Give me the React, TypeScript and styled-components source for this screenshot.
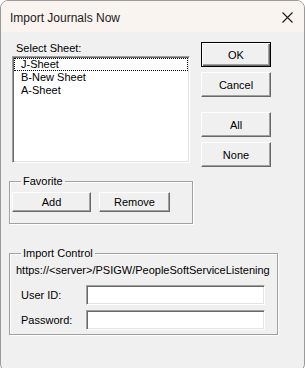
import {FC} from "react"
import styled, {createGlobalStyle} from "styled-components"

const GlobalStyle = createGlobalStyle`
    html, body {
        margin: 0;
        padding: 0;
        background: #ffffff;
        overflow: hidden;
    }
    body {
        font-family: "Liberation Sans", Arial, sans-serif;
        font-size: 11px;
        color: #000;
    }
`

const sheets = ["J-Sheet", "B-New Sheet", "A-Sheet"]

const App: FC = () => {
    return <>
        <GlobalStyle/>
        <Window>
            <TitleBar>
                <Title>Import Journals Now</Title>
                <CloseIcon width="11" height="11" viewBox="0 0 11 11">
                    <path d="M0.5 0.5 L10.5 10.5 M10.5 0.5 L0.5 10.5" stroke="#1a1a1a" strokeWidth="1.1" fill="none"/>
                </CloseIcon>
            </TitleBar>

            <Body>
                <TopRow>
                    <SheetColumn>
                        <Label>Select Sheet:</Label>
                        <ListBox>
                            {sheets.map((s, i) =>
                                <ListItem key={s} focused={i === 0}>{s}</ListItem>
                            )}
                        </ListBox>
                    </SheetColumn>

                    <ButtonColumn>
                        <Button isDefault={true}>OK</Button>
                        <Button>Cancel</Button>
                        <Spacer/>
                        <Button>All</Button>
                        <Button>None</Button>
                    </ButtonColumn>
                </TopRow>

                <Group width={184} top={8}>
                    <Legend>Favorite</Legend>
                    <FavoriteRow>
                        <Button width={79} height={20}>Add</Button>
                        <Button width={71} height={20}>Remove</Button>
                    </FavoriteRow>
                </Group>

                <Group width={269} top={23}>
                    <Legend>Import Control</Legend>
                    <ImportContent>
                        <Url>https://&lt;server&gt;/PSIGW/PeopleSoftServiceListening</Url>
                        <FieldRow>
                            <FieldLabel>User ID:</FieldLabel>
                            <TextInput type="text"/>
                        </FieldRow>
                        <FieldRow>
                            <FieldLabel>Password:</FieldLabel>
                            <TextInput type="password"/>
                        </FieldRow>
                    </ImportContent>
                </Group>
            </Body>
        </Window>
    </>
}

const Window = styled.div`
    box-sizing: border-box;
    width: 305px;
    height: 372px;
    border: 1px solid #9a9a9a;
    border-radius: 8px;
    overflow: hidden;
    background: #f0f0f0;
    display: flex;
    flex-direction: column;
`

const TitleBar = styled.div`
    height: 31px;
    flex-shrink: 0;
    display: flex;
    align-items: center;
    justify-content: space-between;
    padding: 0 11px 0 9px;
    background: #faf4f0;
`

const Title = styled.span`
    font-size: 12px;
    color: #1a1a1a;
    margin-top: 2px;
`

const CloseIcon = styled.svg`
    display: block;
    margin-top: 1px;
`

const Body = styled.div`
    padding: 10px 8px 0 8px;
`

const TopRow = styled.div`
    display: flex;
    margin-left: 3px;
    gap: 11px;
`

const SheetColumn = styled.div`
    width: 178px;
    display: flex;
    flex-direction: column;
`

const Label = styled.div`
    height: 14px;
    line-height: 12px;
    padding-left: 4px;
`

const ListBox = styled.div`
    box-sizing: border-box;
    height: 107px;
    background: #fff;
    border: 1px solid;
    border-color: #a0a0a0 #ffffff #ffffff #a0a0a0;
    box-shadow: inset 1px 1px 0 #696969, inset -1px -1px 0 #e3e3e3;
    padding: 1px 1px;
`

const ListItem = styled.div<{focused?: boolean}>`
    box-sizing: border-box;
    height: 13px;
    line-height: 13px;
    padding-left: 7px;
    outline: ${p => p.focused ? "1px dotted #000" : "none"};
    outline-offset: -1px;
`

const ButtonColumn = styled.div`
    display: flex;
    flex-direction: column;
    gap: 5px;
`

const Spacer = styled.div`
    height: 5px;
`

const Button = styled.button<{isDefault?: boolean, width?: number, height?: number}>`
    box-sizing: border-box;
    width: ${p => p.width ?? 70}px;
    height: ${p => p.height ?? 25}px;
    padding: 0;
    font-family: "Liberation Sans", Arial, sans-serif;
    font-size: 11px;
    color: #000;
    background: #f0f0f0;
    border: 1px solid;
    border-color: ${p => p.isDefault ? "#000" : "#ffffff #696969 #696969 #ffffff"};
    box-shadow: ${p => p.isDefault
        ? "inset 1px 1px 0 #fff, inset -1px -1px 0 #696969, inset -2px -2px 0 #a0a0a0"
        : "inset -1px -1px 0 #a0a0a0"};
`

const Group = styled.fieldset<{width: number, top: number}>`
    box-sizing: border-box;
    width: ${p => p.width}px;
    margin: ${p => p.top}px 0 0 0;
    padding: 0;
    border: 1px solid #a0a0a0;
    box-shadow: inset 1px 1px 0 #fff, 1px 1px 0 #fff;
    min-width: 0;
`

const Legend = styled.legend`
    margin-left: 11px;
    padding: 0 2px;
    line-height: 13px;
    font-size: 11px;
`

const FavoriteRow = styled.div`
    display: flex;
    gap: 8px;
    padding: 4px 0 11px 2px;
`

const ImportContent = styled.div`
    padding: 4px 0 4px 6px;
    display: flex;
    flex-direction: column;
    gap: 5px;
`

const Url = styled.div`
    height: 13px;
    line-height: 13px;
    margin-bottom: 3px;
    white-space: nowrap;
`

const FieldRow = styled.div`
    display: flex;
    align-items: center;
`

const FieldLabel = styled.span`
    width: 65px;
    padding-left: 5px;
`

const TextInput = styled.input`
    box-sizing: border-box;
    width: 179px;
    height: 20px;
    margin: 0;
    padding: 0 2px;
    background: #fff;
    border: 1px solid;
    border-color: #a0a0a0 #ffffff #ffffff #a0a0a0;
    box-shadow: inset 1px 1px 0 #696969, inset -1px -1px 0 #e3e3e3;
    outline: none;
`

export default App
